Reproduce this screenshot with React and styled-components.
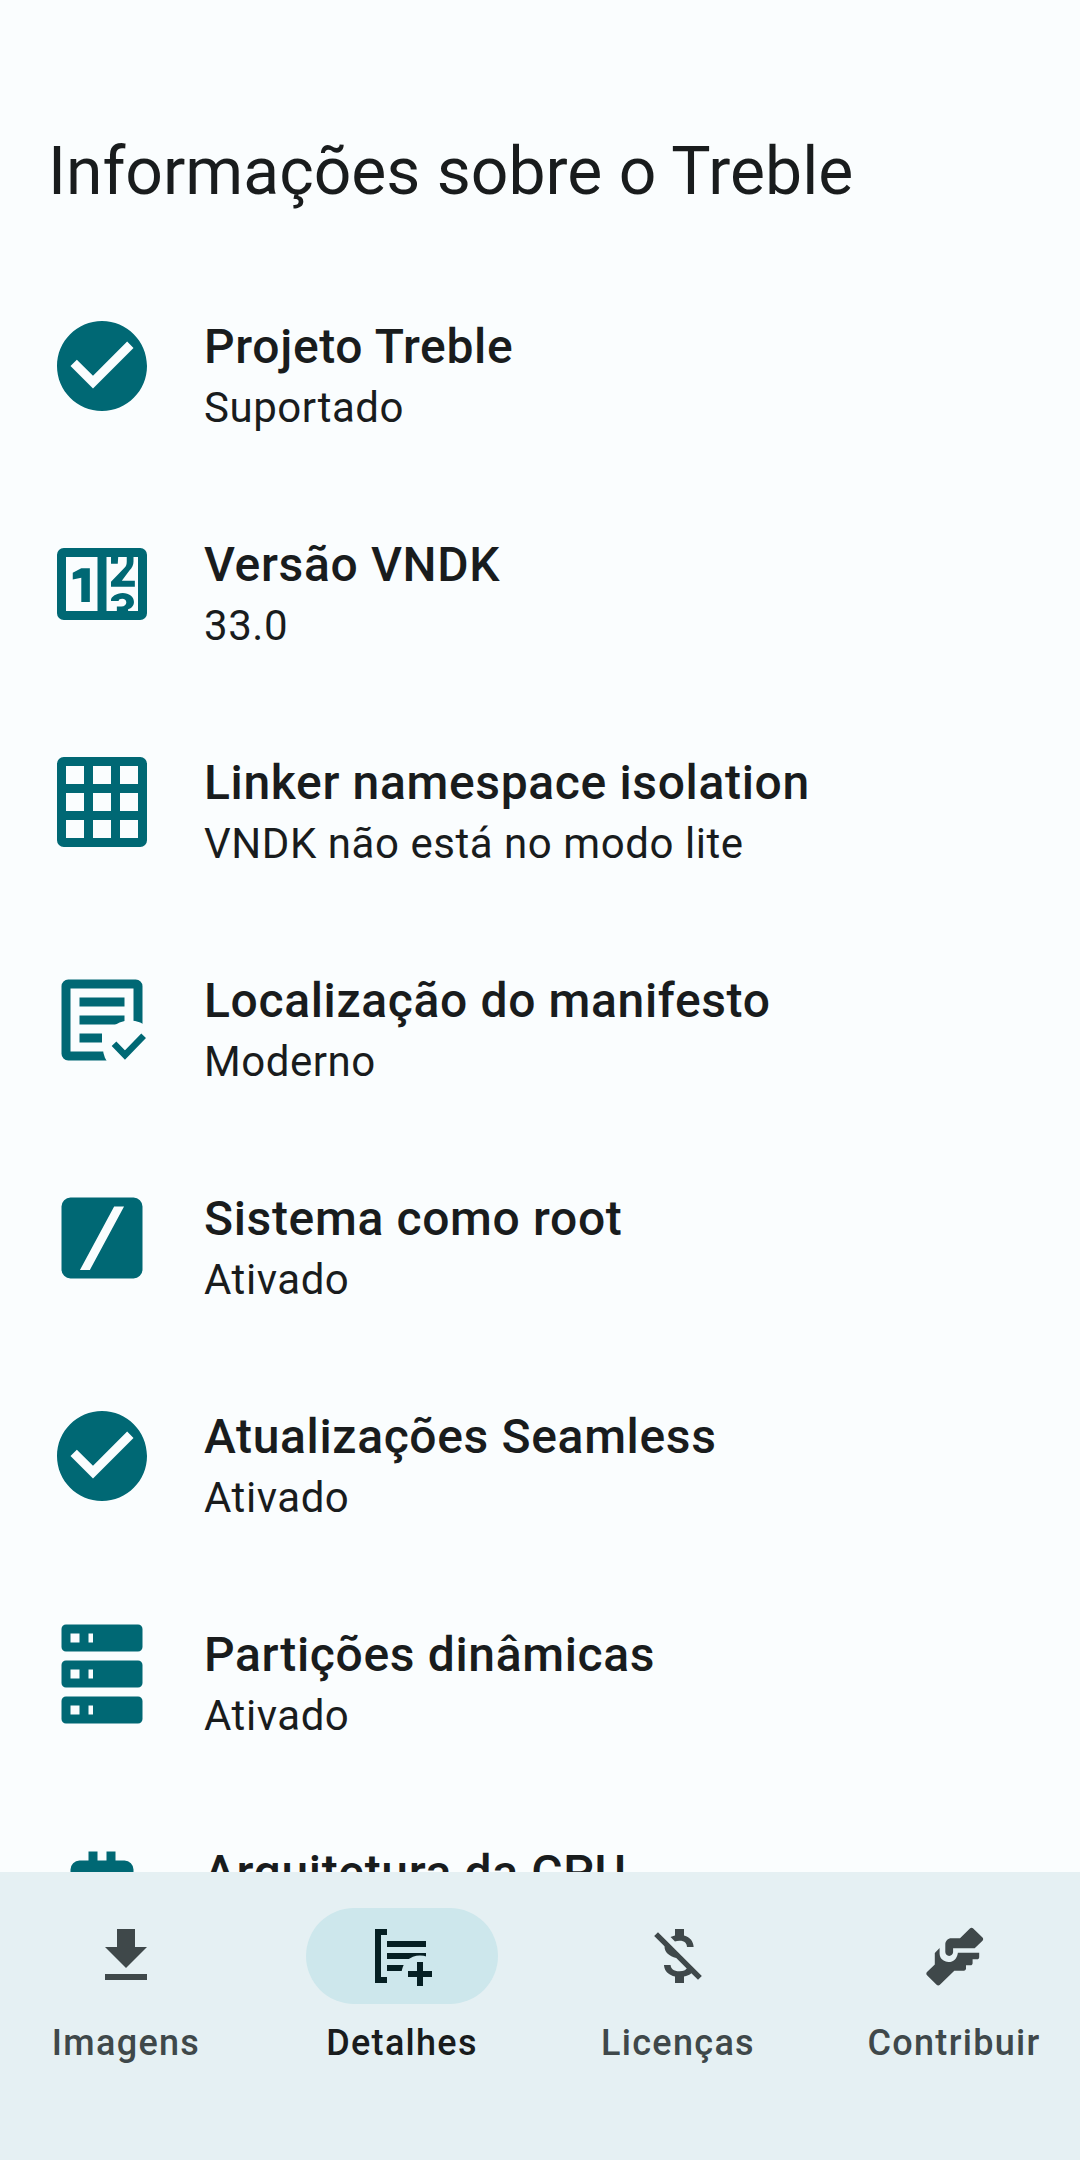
import React from 'react'
import styled, { createGlobalStyle } from 'styled-components'

const Global = createGlobalStyle`
  html, body {
    margin: 0;
    padding: 0;
    background: #fafdfe;
    font-family: Roboto, "Liberation Sans", sans-serif;
  }
`

const Page = styled.div`
  width: 1080px;
  height: 2160px;
  position: relative;
  overflow: hidden;
  background: #fafdfe;
`

const Title = styled.h1`
  margin: 0;
  padding: 134px 48px 0;
  font-size: 66px;
  line-height: 76px;
  font-weight: 400;
  color: #191c1d;
`

const List = styled.div`
  padding-top: 47px;
`

const Row = styled.div`
  height: 218px;
  display: flex;
  align-items: center;
  padding: 0 48px;
  gap: 48px;
`

const IconSlot = styled.div`
  width: 108px;
  height: 108px;
  flex: none;
  color: #006874;
  svg {
    display: block;
    width: 108px;
    height: 108px;
    fill: currentColor;
  }
`

const RowText = styled.div`
  display: flex;
  flex-direction: column;
  padding-top: 22px;
`

const RowTitle = styled.div`
  font-size: 48px;
  line-height: 62px;
  font-weight: 500;
  letter-spacing: 0.65px;
  color: #191c1d;
`

const RowValue = styled.div`
  font-size: 42px;
  line-height: 60px;
  font-weight: 400;
  letter-spacing: 0.55px;
  color: #191c1d;
`

const Nav = styled.nav`
  position: absolute;
  left: 0;
  right: 0;
  bottom: 0;
  height: 288px;
  background: #e5f0f3;
  display: grid;
  grid-template-columns: repeat(4, 276px);
  justify-content: center;
  align-items: start;
`

const NavItem = styled.div`
  display: flex;
  flex-direction: column;
  align-items: center;
  padding-top: 36px;
`

const Pill = styled.div`
  width: 192px;
  height: 96px;
  border-radius: 48px;
  display: flex;
  align-items: center;
  justify-content: center;
  background: ${p => (p.$active ? '#cde7ec' : 'transparent')};
  color: ${p => (p.$active ? '#051f23' : '#3f484a')};
  svg {
    display: block;
    width: 72px;
    height: 72px;
    fill: currentColor;
  }
`

const NavLabel = styled.div`
  margin-top: 15px;
  font-size: 36px;
  line-height: 48px;
  font-weight: 500;
  letter-spacing: 1.3px;
  white-space: nowrap;
  color: ${p => (p.$active ? '#191c1d' : '#3f484a')};
`

const Check = () => (
  <svg viewBox="0 0 24 24">
    <path d="M12 2C6.48 2 2 6.48 2 12s4.48 10 10 10 10-4.48 10-10S17.52 2 12 2zm-2 15l-5-5 1.41-1.41L10 14.17l7.59-7.59L19 8l-9 9z" />
  </svg>
)

const Numbers = () => (
  <svg viewBox="0 0 24 24">
    <path fillRule="evenodd" d="M3.5 4h17A1.5 1.5 0 0 1 22 5.5v13a1.5 1.5 0 0 1-1.5 1.5h-17A1.5 1.5 0 0 1 2 18.5v-13A1.5 1.5 0 0 1 3.5 4zM4 6v12h7V6H4zm9 0v12h7V6h-7z" />
    <path d="M7.4 8.5H9.3V16H7.4V10.6L5.5 11V9.5z" />
    <path d="M14 6h1.6c0 .5-.1 1-.1 1.5H14zM17.5 6H19v1c0 .8-.3 1.4-.9 2l-1.7 2.3h2.9v1.3H14v-1.1l3-3.1c.4-.4.5-.8.5-1.4z" />
    <path d="M14 15.5c0-.6 1.2-1.5 2.6-1.5s2.5.8 2.5 2c0 .8-.5 1.4-1.3 1.6v.4h-2.5v-1h1c.7 0 1.1-.4 1.1-.9s-.4-.8-.9-.8-.8.2-.8.5H14z" />
  </svg>
)

const Grid = () => (
  <svg viewBox="0 0 24 24">
    <path fillRule="evenodd" d="M3.5 2h17A1.5 1.5 0 0 1 22 3.5v17a1.5 1.5 0 0 1-1.5 1.5h-17A1.5 1.5 0 0 1 2 20.5v-17A1.5 1.5 0 0 1 3.5 2zM4 4v4h4V4H4zm6 0v4h4V4h-4zm6 0v4h4V4h-4zM4 10v4h4v-4H4zm6 0v4h4v-4h-4zm6 0v4h4v-4h-4zM4 16v4h4v-4H4zm6 0v4h4v-4h-4zm6 0v4h4v-4h-4z" />
  </svg>
)

const Manifest = () => (
  <svg viewBox="0 0 24 24">
    <path fillRule="evenodd" d="M4.5 3h15A1.5 1.5 0 0 1 21 4.5v15a1.5 1.5 0 0 1-1.5 1.5h-15A1.5 1.5 0 0 1 3 19.5v-15A1.5 1.5 0 0 1 4.5 3zM5 5v14h14V5H5z" />
    <path d="M7 7h10v2H7zM7 11h10v2H7zM7 15h5v2H7z" />
    <circle cx="18.2" cy="18.1" r="6" fill="#fafdfe" />
    <path d="M14.67 17.3l2.43 2.5 4.15-4.3" fill="none" stroke="currentColor" strokeWidth="1.45" />
  </svg>
)

const Slash = () => (
  <svg viewBox="0 0 24 24">
    <path fillRule="evenodd" d="M5 3h14a2 2 0 0 1 2 2v14a2 2 0 0 1-2 2H5a2 2 0 0 1-2-2V5a2 2 0 0 1 2-2zM14.7 5L7.1 19.1h2.2L16.9 5h-2.2z" />
  </svg>
)

const Storage = () => (
  <svg viewBox="0 0 24 24">
    <path fillRule="evenodd" d="M4 1h16a1 1 0 0 1 1 1v4a1 1 0 0 1-1 1H4a1 1 0 0 1-1-1V2a1 1 0 0 1 1-1zm1 2v2h2V3H5zm4 0v2h1V3H9z" />
    <path fillRule="evenodd" d="M4 9h16a1 1 0 0 1 1 1v4a1 1 0 0 1-1 1H4a1 1 0 0 1-1-1v-4a1 1 0 0 1 1-1zm1 2v2h2v-2H5zm4 0v2h1v-2H9z" />
    <path fillRule="evenodd" d="M4 17h16a1 1 0 0 1 1 1v4a1 1 0 0 1-1 1H4a1 1 0 0 1-1-1v-4a1 1 0 0 1 1-1zm1 2v2h2v-2H5zm4 0v2h1v-2H9z" />
  </svg>
)

const Memory = () => (
  <svg viewBox="0 0 24 24">
    <path d="M9 3h2v2h2V3h2v2h2a2 2 0 0 1 2 2v12H5V7a2 2 0 0 1 2-2h2z" />
  </svg>
)

const Download = () => (
  <svg viewBox="0 0 24 24">
    <path d="M19 9h-4V3H9v6H5l7 7 7-7zM5 18v2h14v-2H5z" />
  </svg>
)

const Details = () => (
  <svg viewBox="0 0 24 24">
    <path d="M3 3h4v2H5v14h2v2H3z" />
    <path d="M7 7h13v2H7zM7 11h13v2H7zM7 15h8v2H7z" />
    <circle cx="18" cy="18" r="6.2" fill="#cde7ec" />
    <path d="M17 14h2v3h3v2h-3v3h-2v-3h-3v-2h3z" />
  </svg>
)

const MoneyOff = () => (
  <svg viewBox="0 0 24 24">
    <path d="M12.5 6.9c1.78 0 2.44.85 2.5 2.1h2.21c-.07-1.72-1.12-3.3-3.21-3.81V3h-3v2.16c-.53.12-1.03.3-1.48.54l1.47 1.47c.41-.17.91-.27 1.51-.27zM5.33 4.06L4.06 5.33 7.5 8.77c0 2.08 1.56 3.21 3.91 3.91l3.51 3.51c-.34.48-1.05.91-2.42.91-2.06 0-2.87-.92-2.98-2.1h-2.2c.12 2.19 1.76 3.42 3.68 3.83V21h3v-2.15c.96-.18 1.82-.55 2.45-1.12l2.22 2.22 1.27-1.27L5.33 4.06z" />
  </svg>
)

const Hands = () => (
  <svg viewBox="0 0 24 24">
    <path d="M7.2 9.3v1.9c0 1.7 1.4 2.8 3 2.8s2.8-1 3.1-3.1h7.1v1.5c0 .4-.3.7-.7.7h-1.5v1.3c0 .4-.3.7-.7.7H16v1.1c0 .4-.3.7-.7.7h-3.2l-4.8 4.7c-.3.3-.8.3-1.1 0L3 18.4c-.3-.3-.3-.8 0-1.1l2.6-2.5V11z" />
    <path d="M9.1 8.1c0-1.1.9-2 2-2H14l3.3-3.3c.3-.3.8-.3 1.1 0l3.1 3c.3.3.3.8 0 1.1l-2.6 2.5h-7.2v1.3c0 .7-.6 1.3-1.3 1.3s-1.3-.6-1.3-1.3z" />
  </svg>
)

const rows = [
  { icon: <Check />, title: 'Projeto Treble', value: 'Suportado' },
  { icon: <Numbers />, title: 'Versão VNDK', value: '33.0' },
  { icon: <Grid />, title: 'Linker namespace isolation', value: 'VNDK não está no modo lite' },
  { icon: <Manifest />, title: 'Localização do manifesto', value: 'Moderno' },
  { icon: <Slash />, title: 'Sistema como root', value: 'Ativado' },
  { icon: <Check />, title: 'Atualizações Seamless', value: 'Ativado' },
  { icon: <Storage />, title: 'Partições dinâmicas', value: 'Ativado' },
  { icon: <Memory />, title: 'Arquitetura da CPU', value: 'arm64' },
]

const tabs = [
  { icon: <Download />, label: 'Imagens' },
  { icon: <Details />, label: 'Detalhes', active: true },
  { icon: <MoneyOff />, label: 'Licenças' },
  { icon: <Hands />, label: 'Contribuir' },
]

export default function App() {
  return (
    <Page>
      <Global />
      <Title>Informações sobre o Treble</Title>
      <List>
        {rows.map(r => (
          <Row key={r.title}>
            <IconSlot>{r.icon}</IconSlot>
            <RowText>
              <RowTitle>{r.title}</RowTitle>
              <RowValue>{r.value}</RowValue>
            </RowText>
          </Row>
        ))}
      </List>
      <Nav>
        {tabs.map(t => (
          <NavItem key={t.label}>
            <Pill $active={t.active}>{t.icon}</Pill>
            <NavLabel $active={t.active}>{t.label}</NavLabel>
          </NavItem>
        ))}
      </Nav>
    </Page>
  )
}
